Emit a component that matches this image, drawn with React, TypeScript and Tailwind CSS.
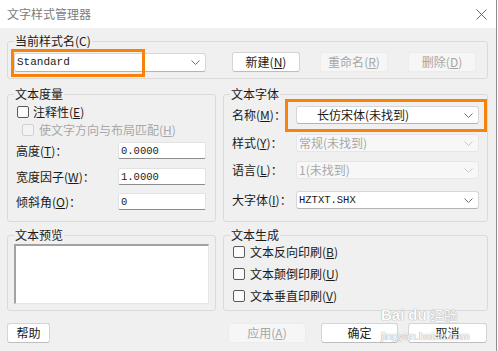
import type { ReactNode } from 'react';
import clsx from 'clsx';

const ui = "font-['Noto_Sans_CJK_SC','Noto_Sans',sans-serif]";
const mono = "font-['Liberation_Mono','Noto_Sans_CJK_SC',monospace]";

function Key({ k }: { k: string }) {
  return (
    <>
      (<span className="underline underline-offset-1">{k}</span>)
    </>
  );
}

function Chevron({ disabled }: { disabled?: boolean }) {
  return (
    <svg width="9" height="5" viewBox="0 0 9 5" className="shrink-0">
      <polyline
        points="0.5,0.5 4.5,4.5 8.5,0.5"
        fill="none"
        stroke={disabled ? '#c8c8c8' : '#707070'}
        strokeWidth="1"
      />
    </svg>
  );
}

interface ComboProps {
  children: ReactNode;
  className?: string;
  disabled?: boolean;
}

function Combo({ children, className, disabled }: ComboProps) {
  return (
    <div
      className={clsx(
        'flex items-center justify-between rounded-[3px] border pr-[5px]',
        disabled
          ? 'border-[#e6e6e6] bg-[#f7f7f7] text-[#a8a8a8]'
          : 'border-[#d6d6d6] border-b-[#b4b4b4] bg-white text-[#1a1a1a]',
        className
      )}
    >
      <span className="whitespace-nowrap">{children}</span>
      <Chevron disabled={disabled} />
    </div>
  );
}

function Check({ disabled }: { disabled?: boolean }) {
  return (
    <span
      className={clsx(
        'inline-block h-[12px] w-[12px] shrink-0 rounded-[2px] border',
        disabled ? 'border-[#d2d2d2] bg-[#f3f3f3]' : 'border-[#5a5a5a] bg-[#fbfbfb]'
      )}
    />
  );
}

function Group({ title, className, children }: { title: string; className?: string; children: ReactNode }) {
  return (
    <fieldset className={clsx('min-w-0 rounded-[3px] border border-[#dadada]', className)}>
      <legend className="ml-[6px] px-[1px] text-[12px] leading-[14px] text-[#1a1a1a]">{title}</legend>
      {children}
    </fieldset>
  );
}

function Button({ children, className, disabled }: { children: ReactNode; className?: string; disabled?: boolean }) {
  return (
    <button
      className={clsx(
        'flex h-[20px] items-center justify-center rounded-[3px] border text-[12px] leading-[14px]',
        disabled
          ? 'border-[#ececec] bg-[#f6f6f6] text-[#a6a6a6]'
          : 'border-[#d4d4d4] border-b-[#bdbdbd] bg-white text-[#1a1a1a]',
        className
      )}
    >
      {children}
    </button>
  );
}

function Field({ label, value }: { label: ReactNode; value: string }) {
  return (
    <div className="flex h-[17px] items-center">
      <span className="w-[102px] text-[12px] leading-[14px]">{label}</span>
      <div
        className={clsx(
          'flex h-[17px] w-[88px] items-center rounded-[2px] border border-[#e2e2e2] border-b-[#8c8c8c] bg-white pl-[2px] text-[10.5px]',
          mono
        )}
      >
        {value}
      </div>
    </div>
  );
}

export default function App() {
  return (
    <div className={clsx('relative h-[351px] w-[498px] overflow-hidden bg-white text-[#1a1a1a]', ui)}>
      <div className="flex h-full w-[497px] flex-col border-r border-[#8e8e8e] bg-[#f0f0f0]">
        {/* title bar */}
        <div className="flex h-[28px] shrink-0 items-center justify-between bg-white pl-[7px] pr-[9px]">
          <span className="text-[12px] leading-[14px] text-[#7c7c7c]">文字样式管理器</span>
          <svg width="11" height="11" viewBox="0 0 11 11">
            <path d="M0.5 0.5 L10.5 10.5 M10.5 0.5 L0.5 10.5" stroke="#6a6a6a" strokeWidth="1" />
          </svg>
        </div>

        <div className="flex w-[488px] flex-col pl-[7px]">
          <Group title="当前样式名(C)" className="mt-[6px]">
            <div className="flex items-center pb-[6px] pl-[6px] pt-[4px]">
              <Combo className={clsx('h-[19px] w-[192px] pl-[2px] text-[11px]', mono)}>Standard</Combo>
              <Button className="ml-[26px] w-[68px]">
                新建<Key k="N" />
              </Button>
              <Button disabled className="ml-[20px] w-[68px]">
                重命名<Key k="R" />
              </Button>
              <Button disabled className="ml-[20px] w-[68px]">
                删除<Key k="D" />
              </Button>
            </div>
          </Group>

          <div className="mt-[8px] flex gap-[7px]">
            <Group title="文本度量" className="w-[209px]">
              <div className="flex flex-col pb-[11px] pl-[8px] pt-[2px] text-[12px] leading-[14px]">
                <div className="flex h-[18px] items-center gap-[4px] pl-[1px]">
                  <Check />
                  <span>
                    注释性<Key k="E" />
                  </span>
                </div>
                <div className="flex h-[17px] items-center gap-[5px] pl-[6px] text-[#a8a8a8]">
                  <Check disabled />
                  <span>
                    使文字方向与布局匹配<Key k="H" />
                  </span>
                </div>
                <div className="mt-[4px]">
                  <Field label={<>高度<Key k="T" />：</>} value="0.0000" />
                </div>
                <div className="mt-[9px]">
                  <Field label={<>宽度因子<Key k="W" />：</>} value="1.0000" />
                </div>
                <div className="mt-[8px]">
                  <Field label={<>倾斜角<Key k="O" />：</>} value="0" />
                </div>
              </div>
            </Group>

            <Group title="文本字体" className="w-[265px]">
              <div className="flex flex-col pl-[8px] pt-[5px] text-[12px] leading-[14px]">
                <div className="flex items-center">
                  <span className="w-[64px]">
                    名称<Key k="M" />：
                  </span>
                  <Combo className="h-[18px] w-[183px] pl-[20px]">长仿宋体(未找到)</Combo>
                </div>
                <div className="mt-[10px] flex items-center">
                  <span className="w-[64px]">
                    样式<Key k="Y" />：
                  </span>
                  <Combo disabled className="h-[18px] w-[183px] pl-[2px]">常规(未找到)</Combo>
                </div>
                <div className="mt-[9px] flex items-center">
                  <span className="w-[64px]">
                    语言<Key k="L" />：
                  </span>
                  <Combo disabled className="h-[18px] w-[183px] pl-[2px]">1(未找到)</Combo>
                </div>
                <div className="mt-[12px] flex items-center">
                  <span className="w-[64px]">
                    大字体<Key k="I" />：
                  </span>
                  <Combo className={clsx('h-[18px] w-[183px] pl-[2px] text-[10.5px]', mono)}>HZTXT.SHX</Combo>
                </div>
              </div>
            </Group>
          </div>

          <div className="mt-[6px] flex gap-[7px]">
            <Group title="文本预览" className="w-[209px]">
              <div className="pb-[6px] pl-[6px] pt-[2px]">
                <div className="h-[60px] w-[195px] border-l-2 border-t-2 border-b border-r border-l-[#a2a2a2] border-t-[#a2a2a2] border-b-[#e6e6e6] border-r-[#e6e6e6] bg-white" />
              </div>
            </Group>

            <Group title="文本生成" className="w-[265px]">
              <div className="flex flex-col gap-[2px] pl-[9px] text-[12px] leading-[14px]">
                <div className="flex h-[20px] items-center gap-[5px]">
                  <Check />
                  <span>
                    文本反向印刷<Key k="B" />
                  </span>
                </div>
                <div className="flex h-[20px] items-center gap-[5px]">
                  <Check />
                  <span>
                    文本颠倒印刷<Key k="U" />
                  </span>
                </div>
                <div className="flex h-[20px] items-center gap-[5px]">
                  <Check />
                  <span>
                    文本垂直印刷<Key k="V" />
                  </span>
                </div>
              </div>
            </Group>
          </div>

          <div className="mt-[12px] flex items-center">
            <Button className="w-[43px]">帮助</Button>
            <Button disabled className="ml-[178px] w-[78px]">
              应用<Key k="A" />
            </Button>
            <Button className="ml-[15px] w-[77px]">确定</Button>
            <Button className="ml-[10px] w-[79px]">取消</Button>
          </div>
        </div>
      </div>

      {/* annotation highlights */}
      <div className="pointer-events-none absolute left-[11px] top-[49px] h-[28px] w-[134px] border-[3px] border-[#f7820c]" />
      <div className="pointer-events-none absolute left-[285px] top-[99px] h-[33px] w-[202px] border-[3px] border-[#f7820c]" />

      {/* watermark */}
      <div className="pointer-events-none absolute left-[381px] top-[307px] flex flex-col items-start text-white opacity-90 [text-shadow:0_0_1px_#9a9a9a,0_0_1px_#9a9a9a]">
        <div className="flex items-end font-['Liberation_Sans',sans-serif] text-[15px] font-bold leading-[16px]">
          <span>Bai</span>
          <span className="ml-[4px]">du</span>
          <span className={clsx('ml-[3px] text-[14px] font-normal', ui)}>经验</span>
        </div>
        <span className="mt-[7px] font-['Liberation_Sans',sans-serif] text-[11px] leading-[12px]">jingyan.baidu.com</span>
      </div>
    </div>
  );
}
